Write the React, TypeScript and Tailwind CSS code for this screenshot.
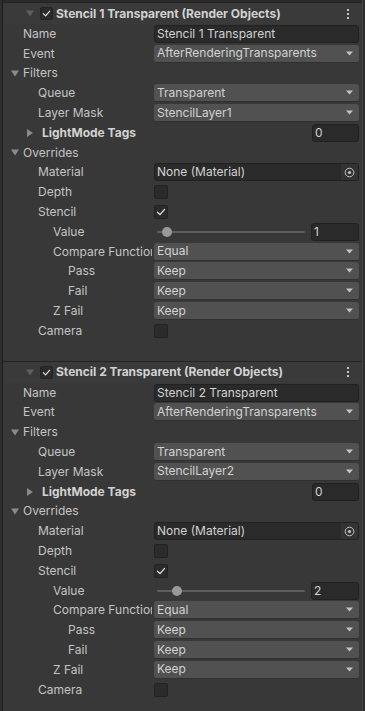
import React from 'react';

type RowKind =
  | { type: 'text'; value: string }
  | { type: 'popup'; value: string }
  | { type: 'number'; value: string }
  | { type: 'object'; value: string }
  | { type: 'toggle'; checked: boolean }
  | { type: 'slider'; value: string; pos: number }
  | { type: 'none' };

interface RowProps {
  label: string;
  indent: number;
  bold?: boolean;
  fold?: 'down' | 'right';
  field: RowKind;
}

const Check = ({ size = 10 }: { size?: number }) => (
  <svg width={size} height={size} viewBox="0 0 10 10" fill="none">
    <path d="M1.5 5.2 L4 7.6 L8.6 2.4" stroke="#e4e4e4" strokeWidth="1.3" strokeLinecap="round" strokeLinejoin="round" />
  </svg>
);

const Toggle = ({ checked }: { checked: boolean }) => (
  <div className="w-[14px] h-[14px] rounded-[2px] bg-[#2b2b2b] border border-[#232323] flex items-center justify-center">
    {checked && <Check />}
  </div>
);

const DownArrow = () => (
  <svg width="7" height="5" viewBox="0 0 7 5">
    <path d="M0 0.5 H7 L3.5 4.5 Z" fill="#c4c4c4" />
  </svg>
);

const FoldDown = ({ color = '#8a8a8a' }: { color?: string }) => (
  <svg width="8" height="7" viewBox="0 0 8 7">
    <path d="M0 0.5 H8 L4 6.5 Z" fill={color} />
  </svg>
);

const FoldRight = () => (
  <svg width="6" height="8" viewBox="0 0 6 8">
    <path d="M0 0 V8 L6 4 Z" fill="#8a8a8a" />
  </svg>
);

const Field = ({ field }: { field: RowKind }) => {
  switch (field.type) {
    case 'text':
      return (
        <div className="h-[18px] w-full rounded-[3px] bg-[#2a2a2a] border border-[#212121] flex items-center pl-[2px] text-[#d2d2d2]">
          {field.value}
        </div>
      );
    case 'popup':
      return (
        <div className="h-[18px] w-full rounded-[3px] bg-[#515151] border-b border-[#303030] flex items-center justify-between pl-[3px] pr-[6px] text-[#d2d2d2]">
          <span>{field.value}</span>
          <DownArrow />
        </div>
      );
    case 'number':
      return (
        <div className="flex justify-end w-full">
          <div className="h-[18px] w-[47px] rounded-[3px] bg-[#2a2a2a] border border-[#212121] flex items-center pl-[2px] text-[#d2d2d2]">
            {field.value}
          </div>
        </div>
      );
    case 'object':
      return (
        <div className="h-[18px] w-full rounded-[3px] bg-[#2a2a2a] border border-[#212121] flex items-center text-[#d2d2d2] overflow-hidden">
          <span className="flex-1 pl-[2px]">{field.value}</span>
          <div className="h-full w-[17px] bg-[#333333] flex items-center justify-center">
            <svg width="11" height="11" viewBox="0 0 11 11" fill="none">
              <circle cx="5.5" cy="5.5" r="4.3" stroke="#c4c4c4" strokeWidth="1" />
              <circle cx="5.5" cy="5.5" r="1.6" fill="#c4c4c4" />
            </svg>
          </div>
        </div>
      );
    case 'toggle':
      return <Toggle checked={field.checked} />;
    case 'slider':
      return (
        <div className="flex items-center w-full">
          <div className="relative flex-1 h-[18px] flex items-center mr-[6px] ml-[3px]">
            <div className="h-[2px] w-full bg-[#5e5e5e] rounded" />
            <div
              className="absolute w-[10px] h-[10px] rounded-full bg-[#999999] top-[4px]"
              style={{ left: field.pos }}
            />
          </div>
          <div className="h-[18px] w-[48px] rounded-[3px] bg-[#2a2a2a] border border-[#212121] flex items-center pl-[2px] text-[#d2d2d2]">
            {field.value}
          </div>
        </div>
      );
    default:
      return null;
  }
};

const Row = ({ label, indent, bold, fold, field }: RowProps) => (
  <div className="h-[19.8px] flex items-center">
    <div
      className="w-[149px] h-[18px] shrink-0 flex items-center overflow-hidden whitespace-nowrap text-[#c4c4c4]"
      style={{ paddingLeft: indent }}
    >
      {fold === 'down' && (
        <span className="w-[8px] mr-[4px] flex items-center">
          <FoldDown />
        </span>
      )}
      {fold === 'right' && (
        <span className="w-[6px] mr-[9px] flex items-center">
          <FoldRight />
        </span>
      )}
      <span className={bold ? 'font-bold text-[#d2d2d2]' : ''}>{label}</span>
    </div>
    <div className="ml-[2px] w-[205px] flex items-center">
      <Field field={field} />
    </div>
  </div>
);

const Section = ({ n }: { n: number }) => {
  const rows: RowProps[] = [
    { label: 'Name', indent: 20, field: { type: 'text', value: `Stencil ${n} Transparent` } },
    { label: 'Event', indent: 20, field: { type: 'popup', value: 'AfterRenderingTransparents' } },
    { label: 'Filters', indent: 8, fold: 'down', field: { type: 'none' } },
    { label: 'Queue', indent: 35, field: { type: 'popup', value: 'Transparent' } },
    { label: 'Layer Mask', indent: 35, field: { type: 'popup', value: `StencilLayer${n}` } },
    { label: 'LightMode Tags', indent: 24, bold: true, fold: 'right', field: { type: 'number', value: '0' } },
    { label: 'Overrides', indent: 8, fold: 'down', field: { type: 'none' } },
    { label: 'Material', indent: 35, field: { type: 'object', value: 'None (Material)' } },
    { label: 'Depth', indent: 35, field: { type: 'toggle', checked: false } },
    { label: 'Stencil', indent: 35, field: { type: 'toggle', checked: true } },
    { label: 'Value', indent: 50, field: { type: 'slider', value: String(n), pos: n === 1 ? 5 : 15 } },
    { label: 'Compare Function', indent: 50, field: { type: 'popup', value: 'Equal' } },
    { label: 'Pass', indent: 65, field: { type: 'popup', value: 'Keep' } },
    { label: 'Fail', indent: 65, field: { type: 'popup', value: 'Keep' } },
    { label: 'Z Fail', indent: 50, field: { type: 'popup', value: 'Keep' } },
    { label: 'Camera', indent: 35, field: { type: 'toggle', checked: false } },
  ];

  return (
    <div className="border-t border-[#232323]">
      <div className="h-[21px] bg-[#3a3a3a] flex items-center">
        <span className="ml-[23px] w-[8px] flex items-center">
          <FoldDown color="#5f5f5f" />
        </span>
        <span className="ml-[6px] w-[13px] h-[13px] rounded-[2px] bg-[#2b2b2b] border border-[#232323] flex items-center justify-center">
          <Check size={9} />
        </span>
        <span className="ml-[3px] font-bold text-[#d2d2d2]">Stencil {n} Transparent (Render Objects)</span>
        <span className="ml-auto mr-[13px] flex flex-col gap-[2px]">
          <span className="w-[2px] h-[2px] bg-[#c4c4c4]" />
          <span className="w-[2px] h-[2px] bg-[#c4c4c4]" />
          <span className="w-[2px] h-[2px] bg-[#c4c4c4]" />
        </span>
      </div>
      {rows.map((r) => (
        <Row key={r.label} {...r} />
      ))}
      <div className="h-[20px]" />
    </div>
  );
}

export default function App() {
  return (
    <div
      className="w-[365px] h-[711px] overflow-hidden bg-[#2e2e2e] pl-[2px] text-[12px] leading-[16px]"
      style={{ fontFamily: 'Inter, "Noto Sans", sans-serif' }}
    >
      <div className="h-full bg-[#383838] border-l border-[#1b1b1b] border-r border-r-[#444444] mr-[2px]">
        <div className="h-[2px] bg-[#2a2a2a]" />
        <Section n={1} />
        <Section n={2} />
      </div>
    </div>
  );
}
